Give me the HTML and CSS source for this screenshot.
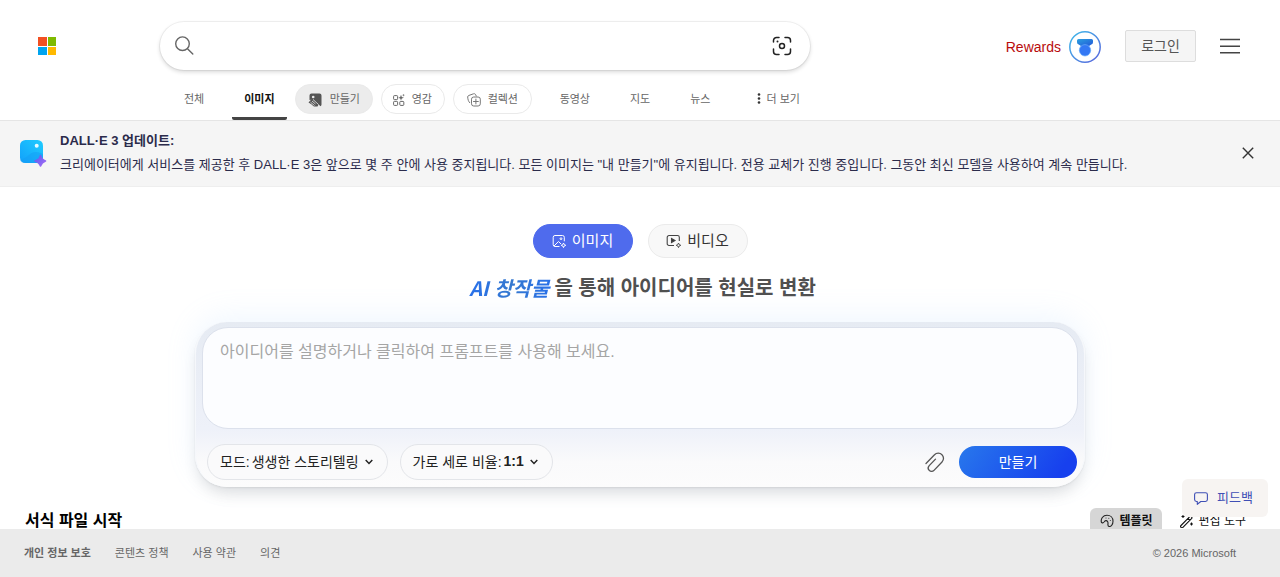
FILE: index.html
```html
<!DOCTYPE html>
<html lang="ko">
<head>
    <meta charset="UTF-8">
    <meta name="viewport" content="width=device-width, initial-scale=1.0">
    <title>Image Creator</title>
    <link rel="stylesheet" href="styles.css">
</head>
<body>
    <header class="header">
        <div class="topbar">
            <div class="logo"><span class="red"></span><span class="green"></span><span class="blue"></span><span class="yellow"></span></div>
            <div class="search">
                <svg width="20" height="20" viewBox="0 0 20 20" fill="none" stroke="#666" stroke-width="1.4" stroke-linecap="round"><circle cx="7.500" cy="7.700" r="6.800"/><path d="M12.500 12.700l5.300 5.300"/></svg>
                <svg width="20" height="20" viewBox="0 0 20 20" fill="none" stroke="#222" stroke-width="1.500" stroke-linecap="round"><path d="M1.500 6V4.500a3 3 0 0 1 3-3H7M13 1.500h2.500a3 3 0 0 1 3 3V6M18.500 13v2.500a3 3 0 0 1-3 3H13M7 18.500H4.500a3 3 0 0 1-3-3V13"/><circle cx="10" cy="10" r="2.500"/><circle cx="5.500" cy="5.500" r="1" fill="#222" stroke="none"/></svg>
            </div>
            <div class="account">
                <a class="rewards">Rewards</a>
                <svg class="medal" width="32" height="32" viewBox="0 0 32 32">
                    <defs>
                        <linearGradient id="ring" x1="0" y1="0" x2="1" y2="1"><stop offset="0" stop-color="#3dbbea"/><stop offset="1" stop-color="#5a63dc"/></linearGradient>
                        <linearGradient id="ribbon" x1="0" y1="0" x2="1" y2="1"><stop offset="0" stop-color="#2a9fe0"/><stop offset="1" stop-color="#2358d8"/></linearGradient>
                    </defs>
                    <circle cx="16" cy="16" r="15.200" fill="#fff" stroke="url(#ring)" stroke-width="1.500"/>
                    <path d="M9.500 8h13a1.500 1.500 0 0 1 1.500 1.500v1.700a2.500 2.500 0 0 1-1.700 2.400L20 15h-8l-2.300-1.400A2.500 2.500 0 0 1 8 11.200V9.500A1.500 1.500 0 0 1 9.500 8z" fill="url(#ribbon)"/>
                    <circle cx="16" cy="19.300" r="5.700" fill="#3478f4" stroke="#6aaefa" stroke-width=".7"/>
                </svg>
                <button class="login">로그인</button>
                <svg width="20" height="16" viewBox="0 0 20 16" stroke="#444" stroke-width="1.400"><path d="M0 1.500h20M0 8.300h20M0 14.800h20"/></svg>
            </div>
        </div>
        <nav class="nav">
            <a class="tab">전체</a>
            <a class="tab active">이미지</a>
            <a class="pill create">
                <svg width="14" height="14" viewBox="0 0 14 14"><path d="M3.500.5h8A2 2 0 0 1 13.500 2.500v9a2 2 0 0 1-1 1.700L5.500 6.500 1.500 7V2.500a2 2 0 0 1 2-2z" fill="#555"/><circle cx="5.200" cy="4" r="1.300" fill="#ececec"/><path d="M.5 9.500l3-3.300c1-.7 2 0 3 .8l4.500 3.800-1.500 2.700H7c-1.500 0-2-.8-3-1.800z" fill="#555"/><path d="M5 6.500l5.500 5M2.500 9.200l4 3.300M4 8l3.500 3" stroke="#ececec" stroke-width=".8"/></svg>
                만들기
            </a>
            <a class="pill inspire">
                <svg width="12" height="12" viewBox="0 0 12 12" fill="none" stroke="#666" stroke-width="1"><rect x=".6" y="1.600" width="4" height="4" rx=".8"/><rect x=".6" y="7.400" width="4" height="4" rx=".8"/><rect x="6.800" y="7.400" width="4" height="4" rx=".8"/><path d="M8 .8l.8 2.200 2.200.8-2.200.8L8 6.500l-.8-1.900L5.300 3.800 7.200 3z" fill="#666" stroke="none"/><path d="M10.500.2v2M9.500 1.200h2" stroke-width=".6"/></svg>
                영감
            </a>
            <a class="pill collect">
                <svg width="14" height="14" viewBox="0 0 14 14" fill="none" stroke="#777" stroke-width="1"><path d="M3 10C1.500 8.500.8 6.500.7 4c0-.8.300-1.200 1-1.500L6.500.8c1-.3 1.700 0 2.200 1l.7 1.500"/><rect x="4.500" y="4" width="8.800" height="9" rx="2.200"/><path d="M8.900 5.700v5.600M6.100 8.500h5.600"/></svg>
                컬렉션
            </a>
            <a class="tab">동영상</a>
            <a class="tab">지도</a>
            <a class="tab">뉴스</a>
            <a class="more"><svg width="4" height="12" viewBox="0 0 4 12" fill="#333"><circle cx="2" cy="1.500" r="1.300"/><circle cx="2" cy="5.500" r="1.300"/><circle cx="2" cy="9.500" r="1.300"/></svg>더 보기</a>
        </nav>
    </header>

    <section class="banner">
        <svg width="28" height="28" viewBox="0 0 28 28">
            <defs>
                <linearGradient id="pic" x1="0" y1="1" x2="1" y2="0"><stop offset="0" stop-color="#12a0fa"/><stop offset="1" stop-color="#20ccff"/></linearGradient>
                <linearGradient id="spark" x1="0" y1="0" x2="1" y2="1"><stop offset="0" stop-color="#5b5cf0"/><stop offset="1" stop-color="#a66bf5"/></linearGradient>
            </defs>
            <rect x="1" y="1" width="23" height="23" rx="5.500" fill="url(#pic)"/>
            <path d="M1 21c7-1 9-8 16-8 3 0 5 1 7 2v4a5 5 0 0 1-5 5H6a5 5 0 0 1-5-3z" fill="#149cf5" opacity=".45"/>
            <circle cx="17.700" cy="6.700" r="2" fill="#e8fbff"/>
            <path d="M21.500 16.500c1 3.500 2 4.500 5 5.500-3 1-4 2-5 5-1-3-2-4-5.500-5 3.500-1 4.500-2 5.500-5.500z" fill="url(#spark)" stroke="url(#spark)" stroke-width="1.600" stroke-linejoin="round"/>
        </svg>
        <div class="notice">
            <strong>DALL·E 3 업데이트:</strong>
            <p>크리에이터에게 서비스를 제공한 후 DALL·E 3은 앞으로 몇 주 안에 사용 중지됩니다. 모든 이미지는 "내 만들기"에 유지됩니다. 전용 교체가 진행 중입니다. 그동안 최신 모델을 사용하여 계속 만듭니다.</p>
        </div>
        <svg class="close" width="12" height="12" viewBox="0 0 12 12" stroke="#333" stroke-width="1.400"><path d="M.8.8l10.400 10.400M11.200.8L.8 11.200"/></svg>
    </section>

    <main class="main">
        <div class="modes">
            <button class="mode selected">
                <svg width="15" height="15" viewBox="0 0 15 15" fill="none" stroke="#fff" stroke-width="1"><path d="M7.500 12.500H3A1.800 1.800 0 0 1 1.200 10.700V3.300A1.800 1.800 0 0 1 3 1.500h7.500a1.800 1.800 0 0 1 1.800 1.800v4M2 12l4.500-4.500L9 10"/><circle cx="9" cy="4.700" r=".9"/><path d="M11.500 9l.7 1.600 1.600.7-1.600.7-.7 1.600-.7-1.600-1.600-.7 1.600-.7z"/></svg>
                이미지
            </button>
            <button class="mode">
                <svg width="16" height="15" viewBox="0 0 16 15" fill="none" stroke="#444" stroke-width="1.100"><path d="M8 11.500H3A1.800 1.800 0 0 1 1.200 9.700V3.300A1.800 1.800 0 0 1 3 1.500h8.500a1.800 1.800 0 0 1 1.800 1.800V7"/><path d="M5.500 4.500l3.500 2-3.500 2z" fill="#333"/><path d="M12.500 9l.7 1.600 1.600.7-1.600.7-.7 1.600-.7-1.600-1.600-.7 1.600-.7z" stroke-width=".9"/></svg>
                비디오
            </button>
        </div>
        <h1 class="title"><em>AI 창작물</em>을 통해 아이디어를 현실로 변환</h1>

        <div class="composer">
            <textarea class="prompt" placeholder="아이디어를 설명하거나 클릭하여 프롬프트를 사용해 보세요."></textarea>
            <div class="controls">
                <button class="option">모드:<span>생생한 스토리텔링</span><svg width="8" height="6" viewBox="0 0 8 6" fill="none" stroke="#222" stroke-width="1.500"><path d="M.7 1L4 4.400 7.300 1"/></svg></button>
                <button class="option">가로 세로 비율:<b>1:1</b><svg width="8" height="6" viewBox="0 0 8 6" fill="none" stroke="#222" stroke-width="1.500"><path d="M.7 1L4 4.400 7.300 1"/></svg></button>
                <svg class="clip" width="20" height="21" viewBox="0 0 20 21" fill="none" stroke="#555" stroke-width="1.300" stroke-linecap="round"><path d="M1 11.500l8.500-8.800a5.100 5.100 0 0 1 7.500 0 5.200 5.200 0 0 1 0 7.300l-8 8.400a3.300 3.300 0 0 1-4.800 0 3.500 3.500 0 0 1 0-4.800l6.300-6.500"/></svg>
                <button class="submit">만들기</button>
            </div>
        </div>

        <div class="templates">
            <h2>서식 파일 시작</h2>
            <div class="chip on"><svg width="14" height="14" viewBox="0 0 14 14" fill="none" stroke="#222" stroke-width="1.100"><path d="M1.500 8.500C.3 4.800 3 1.200 7 1.200c3.500 0 6 2.500 6 6 0 3.200-2 5.800-4 5.300-2.200-.6-.3-3-1.300-4.700-1.200-2-2.600-1.100-3.700.2-.8.900-1.900 1.200-2.500.5z"/><g fill="#222" stroke="none"><circle cx="6" cy="4" r=".5"/><circle cx="8.800" cy="4.200" r=".5"/><circle cx="10.300" cy="6.500" r=".5"/></g></svg><span>템플릿</span></div>
            <div class="chip"><svg width="14" height="14" viewBox="0 0 14 14" fill="none" stroke="#111" stroke-width="1.100"><path d="M1 11.500l8.500-8.700a1.200 1.200 0 0 1 2 1.900L2.900 13.300A1.300 1.300 0 0 1 1 11.500zM8 4.400l1.900 1.900M3 1v3M1.500 2.500h3M11.500 8.500v3M10 10h3"/></svg><span>편집 도구</span></div>
        </div>
    </main>

    <div class="feedback"><svg width="14" height="13" viewBox="0 0 14 13" fill="none" stroke="#3f4fb5" stroke-width="1.100" stroke-linejoin="round"><path d="M2.500.7h9a1.900 1.900 0 0 1 1.900 1.900v5a1.900 1.900 0 0 1-1.900 1.900H6.800l-3.500 2.800V9.500h-.8A1.900 1.900 0 0 1 .6 7.600v-5A1.900 1.900 0 0 1 2.500.7z"/></svg><span>피드백</span></div>

    <footer class="footer">
        <b>개인 정보 보호</b>
        <a>콘텐츠 정책</a>
        <a>사용 약관</a>
        <a>의견</a>
        <span class="copyright">© 2026 Microsoft</span>
    </footer>
</body>
</html>
```
FILE: styles.css
```css
* {
    box-sizing: border-box;
}

body {
    margin: 0;
    height: 577px;
    overflow: hidden;
    display: flex;
    flex-direction: column;
    background: #fff;
    color: #111;
    font-family: "Liberation Sans", "Noto Sans CJK KR", sans-serif;
}

button, textarea {
    font-family: inherit;
    margin: 0;
}

svg {
    flex: none;
}

.header {
    height: 121px;
    flex: none;
    border-bottom: 1px solid #e5e5e5;
}

.topbar {
    display: flex;
    align-items: center;
    height: 78px;
    padding: 14px 40px 0 38px;
}

.logo {
    display: grid;
    grid-template-columns: 8.500px 8.500px;
    grid-auto-rows: 8.500px;
    gap: 1px;
    width: 122px;
}

.red { background: #f25022; }
.green { background: #7fba00; }
.blue { background: #00a4ef; }
.yellow { background: #ffb900; }

.search {
    display: flex;
    align-items: center;
    justify-content: space-between;
    width: 650px;
    height: 48px;
    padding: 0 18px 0 15px;
    border-radius: 24px;
    box-shadow: 0 0 0 1px rgba(0,0,0,.05), 0 2px 4px 0 rgba(0,0,0,.16);
}

.account {
    display: flex;
    align-items: center;
    margin-left: auto;
}

.rewards {
    padding-top: 1px;
    font-size: 14px;
    color: #b80c0c;
}

.medal {
    margin: 2px 24px 0 8px;
}

.login {
    width: 71px;
    height: 32px;
    margin-right: 24px;
    padding: 0 0 2px;
    border: 1px solid #ddd;
    border-radius: 2px;
    background: #f5f5f5;
    color: #555;
    font-size: 14px;
}

.nav {
    display: flex;
    height: 42px;
    padding-left: 172px;
    font-size: 11px;
    line-height: 30px;
    color: #666;
}

.tab {
    height: 42px;
    margin-right: 16px;
    padding: 6px 12px 0;
}

.tab.active {
    margin-right: 8px;
    border-bottom: 3px solid #444;
    border-radius: 2px;
    color: #111;
    font-weight: bold;
}

.pill {
    display: flex;
    align-items: center;
    gap: 7px;
    width: 78px;
    height: 30px;
    margin: 6px 8px 0 0;
    padding-left: 12px;
    border: 1px solid #eaeaea;
    border-radius: 15px;
}

.pill svg {
    margin-top: 2px;
}

.create {
    gap: 8px;
    background: #ececec;
}

.inspire {
    width: 64px;
    padding-left: 11px;
}

.collect {
    width: 79px;
    margin-right: 16px;
    padding-left: 13px;
}

.more {
    display: flex;
    align-items: center;
    gap: 6px;
    margin-left: 18px;
    height: 42px;
}

.banner {
    display: flex;
    align-items: center;
    flex: none;
    height: 66px;
    padding: 0 26px 2px 19px;
    background: #f5f5f5;
    border-bottom: 1px solid #eee;
    color: #2b2b4b;
    font-size: 13px;
}

.notice {
    margin-left: 13px;
    line-height: 24px;
}

.notice strong {
    display: block;
}

.notice p {
    margin: 0;
}

.close {
    margin-left: auto;
}

.main {
    display: flex;
    flex-direction: column;
    align-items: center;
    height: 342px;
    padding-top: 37px;
    overflow: hidden;
}

.modes {
    display: flex;
    gap: 15px;
}

.mode {
    display: flex;
    align-items: center;
    justify-content: center;
    gap: 5px;
    width: 100px;
    height: 34px;
    padding: 0 0 3px;
    border: 1px solid #ebebeb;
    border-radius: 17px;
    background: #f8f8f8;
    color: #333;
    font-size: 15px;
}

.mode svg {
    margin-top: 3px;
}

.mode.selected {
    border-color: #4f6bed;
    background: #4f6bed;
    color: #fff;
}

.title {
    display: flex;
    margin: 15px 0 19px 5px;
    color: #505050;
    font-size: 20px;
    line-height: 30px;
    font-weight: bold;
}

.title em {
    margin-right: 1px;
    padding: 0 4px 0 0;
    background: linear-gradient(90deg, #2870ea, #3578cf 50%, #2870ea);
    -webkit-background-clip: text;
    background-clip: text;
    color: transparent;
    font-family: "Noto Sans CJK KR", sans-serif;
}

.composer {
    flex: none;
    width: 890px;
    height: 165px;
    padding: 5px 7px 0 6px;
    border: 1px solid #f5f7fb;
    border-width: 0 1px;
    border-radius: 32px;
    background: linear-gradient(#e6ebf3, #eef1f9 65%, #fafafb 85%, #fcfcfc);
    box-shadow: 0 10px 16px -4px rgba(0,0,0,.13), 0 1px 2px rgba(0,0,0,.07), 0 -6px 30px rgba(150,200,255,.14);
}

.prompt {
    display: block;
    width: 876px;
    height: 102px;
    padding: 12px 17px;
    border: 1px solid #dce1ec;
    border-radius: 26px;
    background: #fcfdff;
    font-size: 16px;
    line-height: 24px;
    resize: none;
    outline: none;
}

.prompt::placeholder {
    color: #a5a5a5;
}

.controls {
    display: flex;
    align-items: center;
    margin-top: 15px;
    padding-left: 5px;
}

.option {
    display: flex;
    align-items: center;
    height: 36px;
    margin-right: 12px;
    padding: 0 14px 2px 12px;
    border: 1px solid #e3e5e9;
    border-radius: 18px;
    background: #fafafb;
    color: #222;
    font-size: 14px;
    white-space: nowrap;
}

.option span, .option b {
    margin: 0 6px 0 2px;
}

.option svg {
    margin-top: 2px;
}

.clip {
    margin: 0 14px 0 auto;
}

.submit {
    width: 118px;
    height: 32px;
    padding: 0 0 2px;
    border: none;
    border-radius: 16px;
    background: linear-gradient(125deg, #2878ec, #1740ee 85%);
    color: #fff;
    font-size: 14px;
}

.templates {
    display: flex;
    align-self: stretch;
    flex: none;
    margin-top: 21px;
    padding: 0 24px 0 25px;
}

.templates h2 {
    margin: 0 auto 0 0;
    font-size: 16px;
    line-height: 26px;
    color: #000;
}

.chip {
    display: flex;
    align-items: center;
    gap: 5px;
    height: 26px;
    padding: 0 10px;
    border-radius: 6px;
    color: #111;
    font-size: 12px;
}

.chip span, .feedback span {
    padding-bottom: 3px;
}

.chip.on {
    margin-right: 8px;
    padding-right: 9px;
    background: #d6d6d6;
    font-weight: bold;
}

/* floats above the template row */
.feedback {
    position: absolute;
    right: 12px;
    bottom: 60px;
    display: flex;
    align-items: center;
    gap: 9px;
    width: 86px;
    height: 38px;
    padding-left: 12px;
    border-radius: 6px;
    background: #f7f4f2;
    color: #3f4fb5;
    font-size: 13px;
}

.footer {
    display: flex;
    align-items: center;
    gap: 24px;
    flex: none;
    height: 48px;
    padding: 0 44px 2px 24px;
    background: #ebebeb;
    color: #666;
    font-size: 11px;
}

.copyright {
    margin-left: auto;
    padding-top: 2px;
}
```
